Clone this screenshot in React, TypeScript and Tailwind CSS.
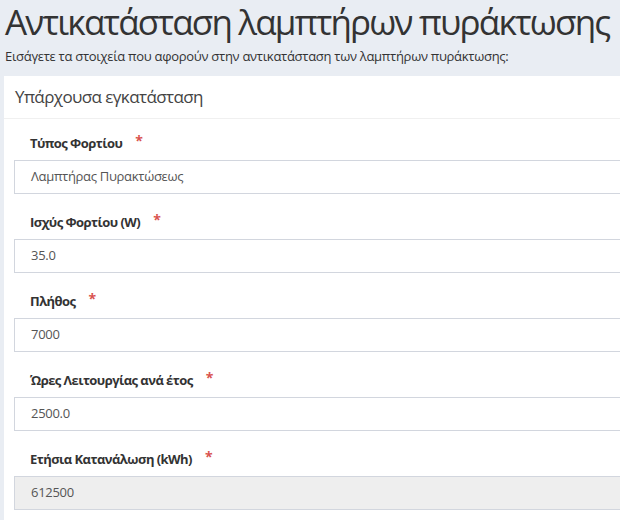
const fields = [
  { label: 'Τύπος Φορτίου', value: 'Λαμπτήρας Πυρακτώσεως', disabled: false },
  { label: 'Ισχύς Φορτίου (W)', value: '35.0', disabled: false },
  { label: 'Πλήθος', value: '7000', disabled: false },
  { label: 'Ώρες Λειτουργίας ανά έτος', value: '2500.0', disabled: false },
  { label: 'Ετήσια Κατανάλωση (kWh)', value: '612500', disabled: true },
];

function Field({ label, value, disabled }: { label: string; value: string; disabled: boolean }) {
  return (
    <div className="mb-[19px]">
      <div className="flex h-[20px] items-center pl-[16px]">
        <span className="text-[13px] font-bold tracking-[-0.55px] text-[#333]">{label}</span>
        <span className="ml-[13px] -mt-[8px] text-[14px] font-bold text-[#d9534f]">*</span>
      </div>
      <div
        className={`mt-[6px] flex h-[34px] items-center border border-[#d2d6de] pl-[16px] text-[13px] tracking-[-0.3px] text-[#555] ${
          disabled ? 'bg-[#eeeeee]' : 'bg-white'
        }`}
      >
        {value}
      </div>
    </div>
  );
}

export default function App() {
  return (
    <div
      className="min-h-screen w-full overflow-hidden bg-[#e9edf3] text-[#333]"
      style={{ fontFamily: '"Open Sans", "Noto Sans", sans-serif' }}
    >
      <h1 className="pl-[5px] text-[35px] leading-[44px] font-normal tracking-[-1.8px] text-[#333] whitespace-nowrap">
        Αντικατάσταση λαμπτήρων πυράκτωσης
      </h1>
      <p className="mt-[2px] pl-[5px] text-[13px] leading-[20px] tracking-[-0.28px] text-[#333]">
        Εισάγετε τα στοιχεία που αφορούν στην αντικατάσταση των λαμπτήρων πυράκτωσης:
      </p>
      <div className="ml-[4px] mt-[10px] w-[660px] bg-white pb-[20px]">
        <div className="flex h-[43px] items-center border-b border-[#f0f0f0] pl-[11px] text-[17px] tracking-[-0.6px] text-[#444]">
          Υπάρχουσα εγκατάσταση
        </div>
        <div className="pl-[10px] pt-[15px]">
          {fields.map((f) => (
            <Field key={f.label} {...f} />
          ))}
        </div>
      </div>
    </div>
  );
}
